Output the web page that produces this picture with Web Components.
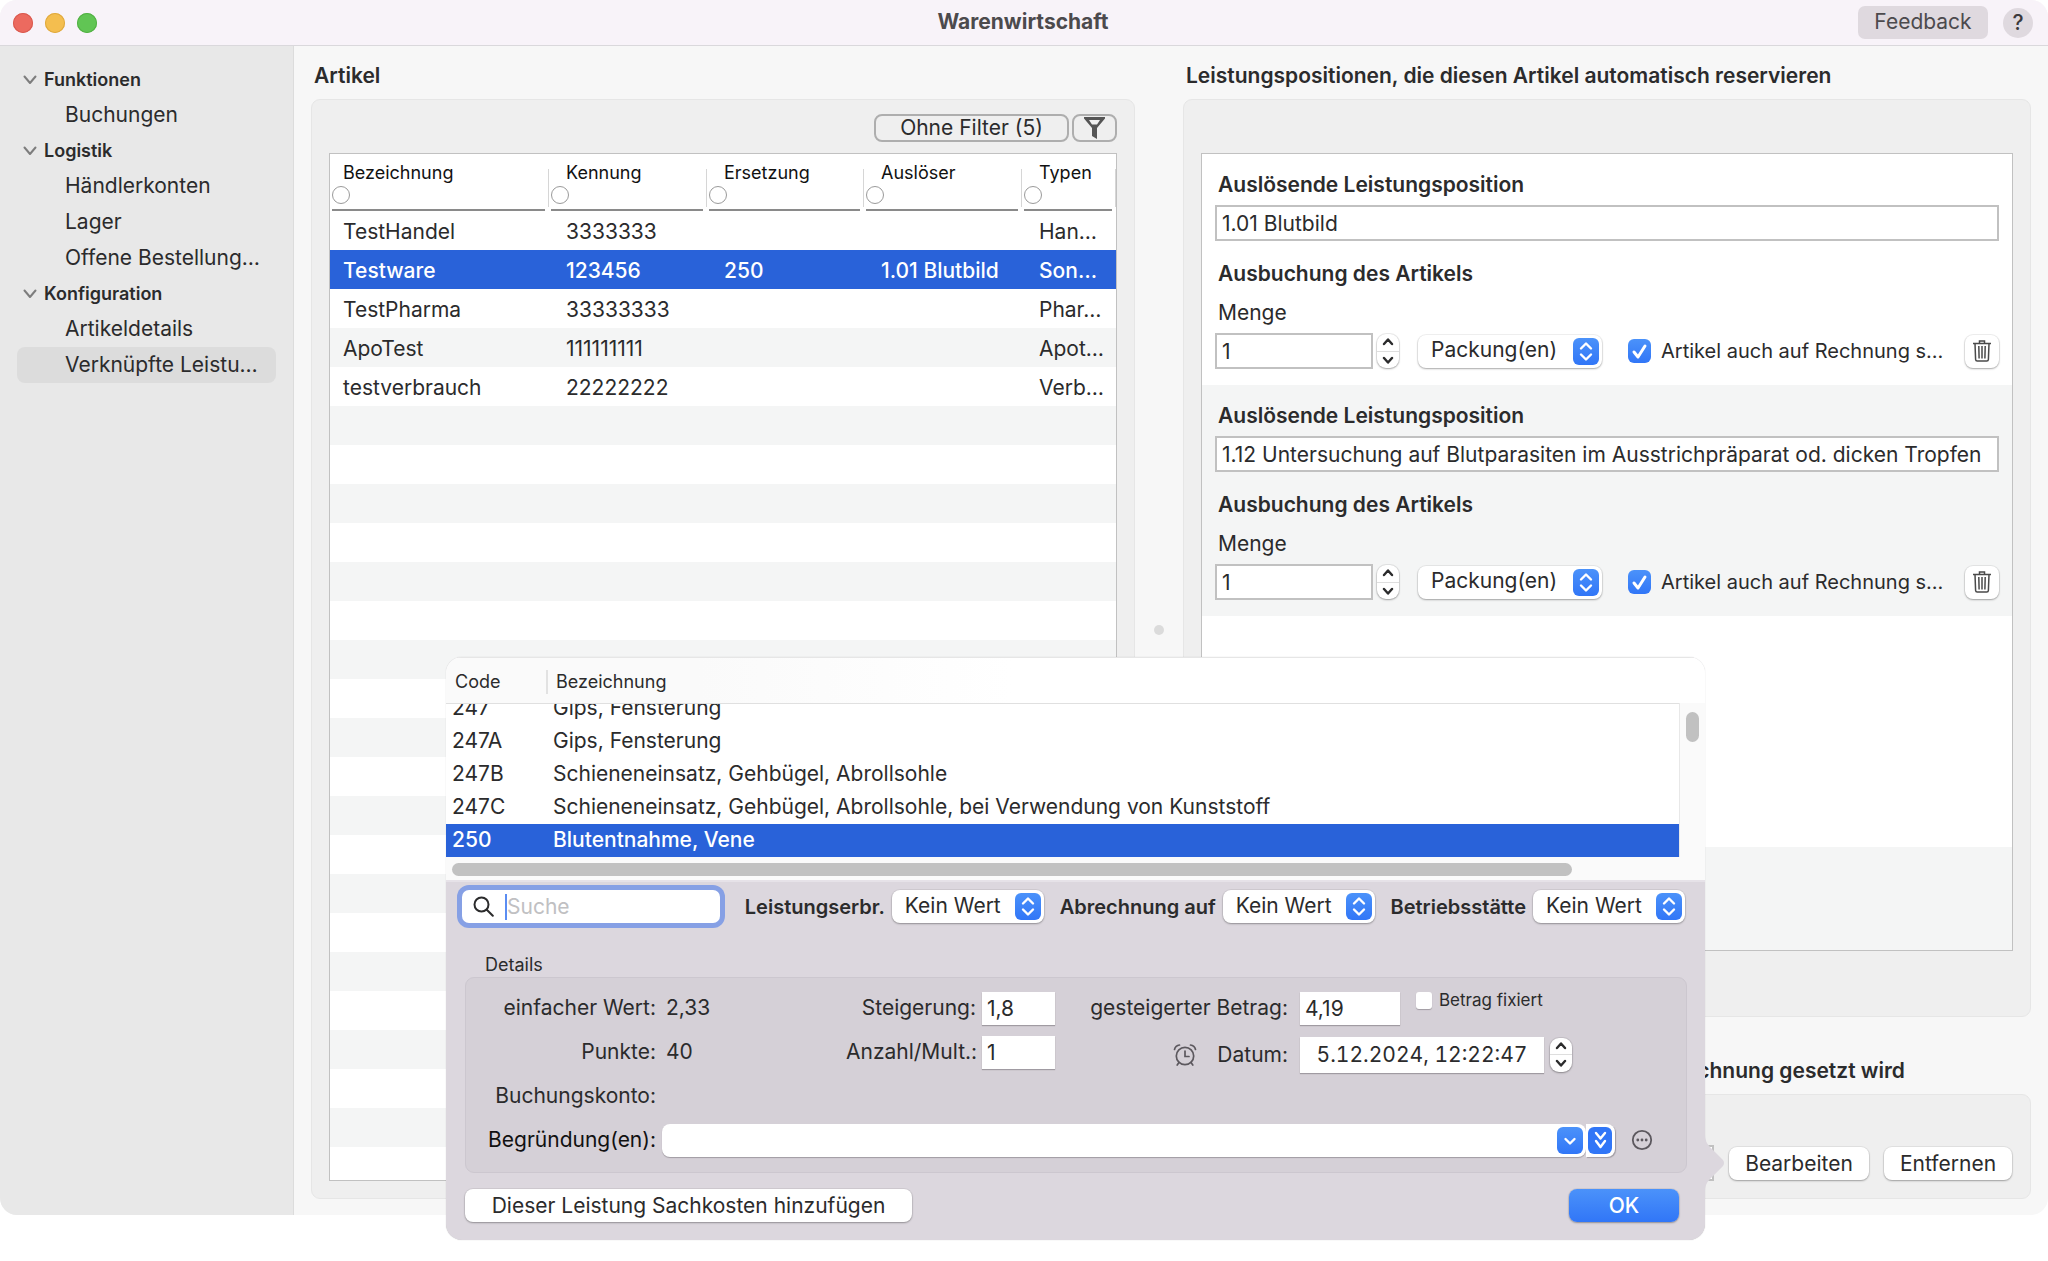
<!DOCTYPE html>
<html lang="de">
<head>
<meta charset="utf-8">
<title>Warenwirtschaft</title>
<style>
  html, body { margin: 0; height: 100%; background: #fff; }
  body {
    --ink: #2b2b2c; --accent: #2962d9; --stripe: #f4f5f5; --line: #c1c1c1;
    --panel: #efefef; --panel-line: #e6e6e6;
    --text: 21px; --medium: 20px; --small: 18px;
    font-family: Inter, "Liberation Sans", sans-serif; font-size: var(--text); line-height: 24px; color: var(--ink);
    box-sizing: border-box; padding-bottom: 46px; min-height: 1240px;
  }
</style>
</head>
<body>
<app-window>
  <title-bar slot="title" name="Warenwirtschaft"></title-bar>
  <side-nav slot="nav">
    <nav-group name="Funktionen">
      <nav-item>Buchungen</nav-item>
    </nav-group>
    <nav-group name="Logistik">
      <nav-item>Händlerkonten</nav-item>
      <nav-item>Lager</nav-item>
      <nav-item>Offene Bestellung…</nav-item>
    </nav-group>
    <nav-group name="Konfiguration">
      <nav-item>Artikeldetails</nav-item>
      <nav-item active>Verknüpfte Leistu…</nav-item>
    </nav-group>
  </side-nav>
  <group-panel slot="left" name="Artikel" fill>
    <article-browser></article-browser>
  </group-panel>
  <group-panel slot="right" name="Leistungspositionen, die diesen Artikel automatisch reservieren" fill>
    <position-list>
      <position-card code="1.01 Blutbild"></position-card>
      <position-card code="1.12 Untersuchung auf Blutparasiten im Ausstrichpräparat od. dicken Tropfen"></position-card>
    </position-list>
  </group-panel>
  <group-panel slot="right" name="Leistungsposition, die anstatt eines Artikels auf Rechnung gesetzt wird">
    <replacement-row></replacement-row>
  </group-panel>
  <service-popover slot="popover">
    <code-list slot="list"></code-list>
    <filter-bar slot="filter"></filter-bar>
    <service-details slot="details"></service-details>
  </service-popover>
</app-window>

<script>
const RESET = `
  :host, *, *::before, *::after { box-sizing: border-box; }
  button, input, select { font: inherit; color: inherit; margin: 0; padding: 0; border: 0; background: none; border-radius: 0; outline: none; }
  h1, h2, h3 { margin: 0; font-size: inherit; font-weight: 600; }
  a { color: inherit; text-decoration: none; }
  svg { display: block; flex: none; }
`;

function define(name, css, render) {
  customElements.define(name, class extends HTMLElement {
    connectedCallback() {
      if (this.shadowRoot) return;
      const root = this.attachShadow({ mode: 'open' });
      const tpl = document.createElement('template');
      tpl.innerHTML = `<style>${RESET}${css}</style>${render(this)}`;
      root.append(tpl.content.cloneNode(true));
    }
  });
}

define('app-window', `
  :host { display: grid; height: 100%; grid-template: 46px minmax(0, 1fr) / 294px minmax(0, 1fr); position: relative; background: #f7f7f7; border-radius: 17px; }
  .title { grid-column: 1 / -1; }
  .main { display: flex; padding: 14px 17px 16px; min-width: 0; }
  .left { flex: 824 1 0; min-width: 0; display: flex; flex-direction: column; }
  .right { flex: 848 1 0; min-width: 0; display: flex; flex-direction: column; gap: 38px; }
  .split { flex: 0 0 48px; display: flex; align-items: center; justify-content: center; }
  .split i { width: 10px; height: 10px; border-radius: 50%; background: #dbdbdb; }
`, () => `
  <div class="title"><slot name="title"></slot></div>
  <slot name="nav"></slot>
  <main class="main">
    <section class="left"><slot name="left"></slot></section>
    <div class="split"><i></i></div>
    <section class="right"><slot name="right"></slot></section>
  </main>
  <slot name="popover"></slot>
`);

define('title-bar', `
  :host { display: grid; grid-template-columns: 1fr auto 1fr; align-items: center; height: 46px; padding: 0 15px 0 13px; background: #f8f3f9; border-bottom: 1px solid #dad8dc; border-radius: 17px 17px 0 0; color: #4c4a4d; }
  h1 { font-weight: 700; line-height: 22px; padding-bottom: 2px; }
  .lights { display: flex; gap: 12px; }
  .lights button { width: 20px; height: 20px; border-radius: 50%; }
  .r { background: #ec6a5f; box-shadow: inset 0 0 0 1px #d95a50; }
  .y { background: #f4be4f; box-shadow: inset 0 0 0 1px #dfa93f; }
  .g { background: #61c554; box-shadow: inset 0 0 0 1px #53b045; }
  .tools { display: flex; gap: 15px; justify-content: flex-end; align-items: center; }
  .feedback { height: 33px; width: 130px; border-radius: 7px; background: #dfd9df; padding-bottom: 1px; }
  .help { width: 30px; height: 30px; border-radius: 50%; background: #dfd9df; font-weight: 500; color: #3b393c; }
`, el => `
  <div class="lights"><button class="r" aria-label="Schließen"></button><button class="y" aria-label="Minimieren"></button><button class="g" aria-label="Maximieren"></button></div>
  <h1>${el.getAttribute('name')}</h1>
  <div class="tools"><button class="feedback">Feedback</button><button class="help">?</button></div>
`);

define('side-nav', `
  :host { display: block; background: #e8e8e8; border-right: 1px solid #dcdcdc; border-radius: 0 0 0 17px; padding: 16px 17px; }
`, () => `<nav><slot></slot></nav>`);

define('nav-group', `
  :host { display: block; }
  h2 { display: flex; align-items: center; gap: 7px; height: 35px; padding-left: 6px; font-size: var(--small); }
`, el => `
  <h2><svg width="14" height="10" viewBox="0 0 14 10" fill="none" stroke="#7d7d7d" stroke-width="2" stroke-linecap="round" stroke-linejoin="round"><path d="M1.500 1.500 7 8l5.500-6.500"/></svg>${el.getAttribute('name')}</h2>
  <slot></slot>
`);

define('nav-item', `
  :host { display: block; border-radius: 8px; }
  :host([active]) { background: #dcdcdc; }
  a { display: flex; align-items: center; height: 36px; padding-left: 48px; white-space: nowrap; }
`, () => `<a href="#"><slot></slot></a>`);

define('group-panel', `
  :host { display: flex; flex-direction: column; min-height: 0; }
  :host([fill]) { flex: 1; }
  h2 { padding-left: 3px; height: 39px; line-height: 32px; white-space: nowrap; }
  .box { flex: 1; min-height: 0; display: flex; flex-direction: column; background: var(--panel); border: 1px solid var(--panel-line); border-radius: 9px; }
`, el => `<h2>${el.getAttribute('name')}</h2><div class="box"><slot></slot></div>`);

define('push-button', `
  :host { display: block; }
  button { width: 100%; height: 33px; padding: 0; border-radius: 8px; background: #fff; box-shadow: 0 0 0 1px rgba(0,0,0,.05), 0 1px 2px rgba(0,0,0,.3); white-space: nowrap; line-height: 31px; }
  :host([primary]) button { background: linear-gradient(#4b92fa, #3176f7); color: #fff; font-weight: 500; }
`, () => `<button><slot></slot></button>`);

define('value-stepper', `
  :host { display: flex; flex-direction: column; flex: none; width: 22px; height: 34px; border-radius: 9px; background: #fff; box-shadow: 0 0 0 1px rgba(0,0,0,.07), 0 1px 2px rgba(0,0,0,.3); }
  button { flex: 1; display: flex; align-items: center; justify-content: center; }
  button + button { border-top: 1px solid #dedede; }
`, () => `
  <button aria-label="Mehr"><svg width="12" height="8" viewBox="0 0 12 8" fill="none" stroke="#2b2b2c" stroke-width="2.400" stroke-linecap="round" stroke-linejoin="round"><path d="m2 6 4-4.500L10 6"/></svg></button>
  <button aria-label="Weniger"><svg width="12" height="8" viewBox="0 0 12 8" fill="none" stroke="#2b2b2c" stroke-width="2.400" stroke-linecap="round" stroke-linejoin="round"><path d="m2 2 4 4.500L10 2"/></svg></button>
`);

define('popup-select', `
  :host { display: flex; align-items: center; flex: none; }
  label { font-weight: 600; font-size: var(--medium); white-space: nowrap; padding-right: 7px; }
  .box { display: grid; flex: 1; align-items: center; border-radius: 8px; background: #fff; box-shadow: 0 0 0 1px rgba(0,0,0,.05), 0 1px 2px rgba(0,0,0,.3); }
  select { grid-area: 1 / 1; appearance: none; width: var(--select-width, 152px); height: 33px; padding: 0 0 2px 13px; }
  svg { grid-area: 1 / 1; justify-self: end; margin-right: 3px; pointer-events: none; }
`, el => `
  ${el.hasAttribute('label') ? `<label for="s">${el.getAttribute('label')}</label>` : ''}
  <div class="box">
    <select id="s" ${el.hasAttribute('label') ? '' : 'aria-label="Einheit"'}><option>${el.getAttribute('value')}</option></select>
    <svg width="26" height="27" viewBox="0 0 26 27"><defs><linearGradient id="g" x2="0" y2="1"><stop stop-color="#4b92fa"/><stop offset="1" stop-color="#3176f7"/></linearGradient></defs><rect width="26" height="27" rx="6" fill="url(#g)"/><path d="m8 10.500 5-5 5 5M8 16.500l5 5 5-5" fill="none" stroke="#fff" stroke-width="2.400" stroke-linecap="round" stroke-linejoin="round"/></svg>
  </div>
`);

const ARTICLES = [
  ['TestHandel', '3333333', '', '', 'Han…'],
  ['Testware', '123456', '250', '1.01 Blutbild', 'Son…'],
  ['TestPharma', '33333333', '', '', 'Phar…'],
  ['ApoTest', '111111111', '', '', 'Apot…'],
  ['testverbrauch', '22222222', '', '', 'Verb…'],
];

define('article-browser', `
  :host { display: flex; flex-direction: column; flex: 1; padding: 14px 17px 17px; min-height: 0; }
  .tools { display: flex; justify-content: flex-end; gap: 3px; margin-bottom: 11px; }
  .tools button { height: 28px; border: 2px solid #aeaeae; border-radius: 8px; line-height: 22px; }
  .filter { width: 195px; }
  .funnel { width: 45px; display: flex; align-items: center; justify-content: center; }
  .frame { flex: 1; border: 1px solid var(--line); overflow: hidden; background: repeating-linear-gradient(#fff 0 39px, var(--stripe) 39px 78px) 0 57px; }
  table { width: 100%; border-collapse: collapse; table-layout: fixed; }
  th { height: 57px; padding: 0; background: #fff; text-align: left; font-weight: 400; font-size: var(--small); color: #111; vertical-align: top; }
  th div { height: 57px; display: grid; grid-template: 32px 25px / 1fr 1px; }
  th span { line-height: 37px; padding-left: 17px; }
  th:first-child span, td:first-child { padding-left: 13px; }
  th .pick { display: block; appearance: none; width: 18px; height: 18px; border: 1px solid #9a9a9a; border-radius: 50%; background: #fff; }
  th label { grid-area: 2 / 1; border-bottom: 2px solid #8a8a8a; margin: 0 3px 0 2px; }
  th i { grid-area: 1 / 2 / 3 / 3; width: 1px; margin: 15px 0 4px; background: #d6d6d6; }
  td { height: 39px; padding: 2px 0 0 17px; white-space: nowrap; }
  tr.on td { background: var(--accent); color: #fff; font-weight: 500; }
`, () => `
  <div class="tools">
    <button class="filter">Ohne Filter (5)</button>
    <button class="funnel" aria-label="Filter"><svg width="21" height="22" viewBox="0 0 21 22"><path fill="#555" fill-rule="evenodd" d="M0 0h21v1.500L13 11v11l-5-3v-8L0 1.500zM5 3l3 4.500h5L16 3z"/></svg></button>
  </div>
  <div class="frame">
    <table>
      <colgroup><col style="width:219px"><col style="width:158px"><col style="width:157px"><col style="width:158px"><col></colgroup>
      <thead><tr>${['Bezeichnung', 'Kennung', 'Ersetzung', 'Auslöser', 'Typen'].map(h => `<th><div><span>${h}</span><i></i><label><input type="radio" class="pick" aria-label="${h}"></label></div></th>`).join('')}</tr></thead>
      <tbody>${ARTICLES.map((r, i) => `<tr class="${i === 1 ? 'on' : ''}">${r.map(c => `<td>${c}</td>`).join('')}</tr>`).join('')}</tbody>
    </table>
  </div>
`);

define('position-list', `
  :host { display: flex; flex-direction: column; flex: 1; padding: 53px 17px 65px; min-height: 0; }
  .frame { flex: 1; border: 1px solid var(--line); overflow: hidden; background: repeating-linear-gradient(#fff 0 231px, var(--stripe) 231px 462px); }
`, () => `<div class="frame"><slot></slot></div>`);

define('position-card', `
  :host { display: block; height: 231px; padding: 15px 13px 0 13px; }
  h3, label.name { display: block; line-height: 32px; padding-left: 3px; }
  label.name { font-weight: 600; }
  input[type=text] { border: 2px solid var(--line); background: #fff; height: 36px; padding: 0 5px; width: 100%; display: block; }
  label.name + input { margin: 4px 0 17px; }
  label.qty { display: block; line-height: 24px; padding: 11px 0 8px 3px; }
  .row { display: flex; align-items: center; }
  .row input.num { width: 158px; margin-right: 4px; flex: none; }
  popup-select { --select-width: 184px; margin: 0 26px 0 19px; }
  .tick { display: flex; align-items: center; gap: 10px; flex: 1; min-width: 0; white-space: nowrap; font-size: var(--medium); }
  .tick span { display: grid; flex: none; }
  .tick input { appearance: none; grid-area: 1 / 1; width: 23px; height: 24px; border-radius: 6px; background: linear-gradient(#4b92fa, #3176f7); }
  .tick svg { grid-area: 1 / 1; pointer-events: none; }
  .trash { width: 34px; height: 33px; border-radius: 8px; background: #fff; box-shadow: 0 0 0 1px rgba(0,0,0,.06), 0 1px 2px rgba(0,0,0,.3); display: flex; align-items: center; justify-content: center; }
`, el => `
  <label class="name" for="p">Auslösende Leistungsposition</label>
  <input id="p" type="text" value="${el.getAttribute('code')}">
  <h3>Ausbuchung des Artikels</h3>
  <label class="qty" for="q">Menge</label>
  <div class="row">
    <input id="q" class="num" type="text" value="1">
    <value-stepper></value-stepper>
    <popup-select value="Packung(en)"></popup-select>
    <label class="tick"><span><input type="checkbox" checked><svg width="23" height="24" viewBox="0 0 23 24" fill="none" stroke="#fff" stroke-width="3" stroke-linecap="round" stroke-linejoin="round"><path d="m6 13 4 5L17 7"/></svg></span>Artikel auch auf Rechnung s…</label>
    <button class="trash" aria-label="Löschen"><svg width="18" height="22" viewBox="0 0 18 22" fill="none" stroke="#4a4a4a" stroke-width="1.500"><path d="M0 3.500h18M6.500 3.500V1h5v2.500M2 3.500l.6 16Q2.700 21 4.200 21h9.600q1.500 0 1.600-1.500l.6-16M5.800 6l.3 12.500M9 6v12.500M12.200 6l-.3 12.500"/></svg></button>
  </div>
`);

define('replacement-row', `
  :host { display: flex; align-items: center; gap: 15px; padding: 50px 18px 17px 17px; }
  input { flex: 1; min-width: 0; height: 36px; border: 2px solid var(--line); background: #fff; padding: 0 5px; }
  push-button:nth-of-type(1) { width: 140px; }
  push-button:nth-of-type(2) { width: 128px; }
`, () => `<input type="text" aria-label="Ersetzende Leistungsposition"><push-button>Bearbeiten</push-button><push-button>Entfernen</push-button>`);

define('service-popover', `
  :host { position: absolute; left: 446px; top: 657px; width: 1259px; z-index: 2; display: flex; flex-direction: column; background: #dcd7de; border-radius: 16px; box-shadow: 0 0 1px rgba(0,0,0,.25); }
  .arrow { position: absolute; left: 100%; top: 478px; }
  .foot { display: flex; justify-content: space-between; padding: 16px 26px 18px 19px; }
  .foot push-button:first-child { width: 447px; }
  .foot push-button:last-child { width: 110px; }
`, () => `
  <slot name="list"></slot>
  <slot name="filter"></slot>
  <slot name="details"></slot>
  <div class="foot"><push-button>Dieser Leistung Sachkosten hinzufügen</push-button><push-button primary>OK</push-button></div>
  <svg class="arrow" width="20" height="56" viewBox="0 0 20 56"><path fill="#dcd7de" d="M0 0q0 7 5 12l13 13q2 3 0 6L5 44q-5 5-5 12z"/></svg>
`);

const CODES = [
  ['247', 'Gips, Fensterung'],
  ['247A', 'Gips, Fensterung'],
  ['247B', 'Schieneneinsatz, Gehbügel, Abrollsohle'],
  ['247C', 'Schieneneinsatz, Gehbügel, Abrollsohle, bei Verwendung von Kunststoff'],
  ['250', 'Blutentnahme, Vene'],
];

define('code-list', `
  :host { display: grid; grid-template: 46px 154px 23px / minmax(0, 1fr) 26px; background: #fafafa; border-radius: 16px 16px 0 0; border-bottom: 2px solid #e6e2e8; overflow: hidden; }
  .head { grid-column: 1 / -1; background: linear-gradient(90deg, #fafafa, #fafafa 20%, #fff 45%); font-size: var(--small); display: flex; align-items: center; padding-top: 2px; border-top: 1px solid #e6e6e6; }
  .head span:first-child { width: 100px; padding-left: 9px; }
  .head span + span { border-left: 2px solid #e2e2e2; padding-left: 8px; }
  .view { border-top: 1px solid #e0e0e0; background: #fff; overflow: hidden; display: flex; flex-direction: column; justify-content: flex-end; }
  table { border-collapse: collapse; width: 100%; table-layout: fixed; flex: none; }
  td { height: 33px; padding: 0 0 1px 6px; white-space: nowrap; line-height: 24px; }
  tr:last-child td { background: var(--accent); color: #fff; font-weight: 500; }
  .v { border-left: 1px solid #e8e8e8; padding: 9px 6px; }
  .v i, .h i { display: block; background: #c1c1c1; border-radius: 7px; }
  .v i { height: 30px; width: 13px; }
  .h { padding: 6px; grid-column: 1 / -1; }
  .h i { height: 13px; width: 1120px; }
`, () => `
  <div class="head"><span>Code</span><span>Bezeichnung</span></div>
  <div class="view"><table><colgroup><col style="width:101px"><col></colgroup>${CODES.map(r => `<tr><td>${r[0]}</td><td>${r[1]}</td></tr>`).join('')}</table></div>
  <div class="v"><i></i></div>
  <div class="h"><i></i></div>
`);

define('filter-bar', `
  :host { display: flex; align-items: center; justify-content: space-between; padding: 8px 20px 0 16px; }
  .search { display: flex; align-items: center; width: 258px; height: 33px; border-radius: 7px; background: #fff; box-shadow: 0 0 0 5px #86a0e5; padding-left: 11px; margin-right: 9px; }
  .search i { width: 2px; height: 26px; background: #5b8df2; margin-left: 11px; }
  input { flex: 1; min-width: 0; height: 33px; }
  input::placeholder { color: #c0c0c2; opacity: 1; }
`, () => `
  <label class="search"><svg width="21" height="21" viewBox="0 0 21 21" fill="none" stroke="#2b2b2c" stroke-width="2" stroke-linecap="round"><circle cx="8.500" cy="8.500" r="7"/><path d="m13.800 13.800 6 6"/></svg><i></i><input type="search" placeholder="Suche" aria-label="Suche"></label>
  <popup-select label="Leistungserbr." value="Kein Wert"></popup-select>
  <popup-select label="Abrechnung auf" value="Kein Wert"></popup-select>
  <popup-select label="Betriebsstätte" value="Kein Wert"></popup-select>
`);

define('service-details', `
  :host { display: block; padding: 30px 18px 0 19px; }
  h3 { font-size: var(--small); font-weight: 400; padding-left: 20px; }
  .box { display: grid; grid-template: repeat(4, 44px) / 190px minmax(0, 1fr) 130px 73px 233px 386px; column-gap: 6px; align-items: center; padding: 8px 0 10px; background: #d5d0d7; border: 1px solid #ccc7cf; border-radius: 9px; }
  .l { text-align: right; white-space: nowrap; }
  .l.pad { padding-right: 6px; }
  output { padding-left: 4px; }
  input { background: #fff; box-shadow: 0 1px 1px #a09ba2; height: 33px; padding: 0 5px; width: 100%; }
  .amount { display: flex; align-items: flex-start; }
  .amount input[type=text] { width: 100px; }
  .amount label { display: flex; align-items: center; gap: 7px; font-size: 17px; line-height: 17px; margin-left: 16px; }
  .amount input[type=checkbox] { appearance: none; width: 16px; height: 17px; border-radius: 3px; padding: 0; }
  .when, .date { padding-top: 5px; }
  .when { display: flex; align-items: center; justify-content: flex-end; gap: 20px; }
  .date { display: flex; align-items: center; gap: 6px; }
  .date input { width: 244px; height: 36px; text-align: center; font-variant-numeric: tabular-nums; }
  .reason { grid-column: 2 / -1; display: flex; align-items: center; }
  .combo { flex: 0 0 924px; display: flex; align-items: center; height: 33px; background: #fff; border-radius: 8px; box-shadow: 0 1px 1px #a09ba2; padding-right: 3px; }
  .combo input { flex: 1; background: none; box-shadow: none; min-width: 0; }
  .more { height: 33px; padding: 0 3px 0 2px; background: #fff; border-radius: 0 8px 8px 0; box-shadow: 1px 1px 1px #a09ba2; margin-right: 16px; display: flex; align-items: center; }
  .black { color: #111; }
`, () => `
  <h3>Details</h3>
  <div class="box">
    <span class="l">einfacher Wert:</span><output>2,33</output>
    <label class="l" for="st">Steigerung:</label><input id="st" type="text" value="1,8">
    <label class="l pad" for="be">gesteigerter Betrag:</label>
    <div class="amount"><input id="be" type="text" value="4,19"><label><input type="checkbox">Betrag fixiert</label></div>

    <span class="l">Punkte:</span><output>40</output>
    <label class="l" for="an">Anzahl/Mult.:</label><input id="an" type="text" value="1">
    <div class="when l pad">
      <svg width="24" height="24" viewBox="0 0 24 24" fill="none" stroke="#5c585e" stroke-width="1.700" stroke-linecap="round"><circle cx="12" cy="13" r="8.700"/><path d="M12 8v5.500h4M1.500 6.500q1-4 5-4.500M22.500 6.500q-1-4-5-4.500M6 19.500l-1.800 2.500M18 19.500l1.800 2.500"/></svg>
      <label for="da">Datum:</label>
    </div>
    <div class="date"><input id="da" type="text" value="5.12.2024, 12:22:47"><value-stepper></value-stepper></div>

    <span class="l">Buchungskonto:</span><output></output><span></span><span></span><span></span><span></span>

    <label class="l black" for="gr">Begründung(en):</label>
    <div class="reason">
      <div class="combo"><input id="gr" type="text"><button aria-label="Liste öffnen"><svg width="26" height="27" viewBox="0 0 26 27"><defs><linearGradient id="c" x2="0" y2="1"><stop stop-color="#4b92fa"/><stop offset="1" stop-color="#3176f7"/></linearGradient></defs><rect width="26" height="27" rx="6" fill="url(#c)"/><path d="m8.500 12 4.500 4.500 4.500-4.500" fill="none" stroke="#fff" stroke-width="2.400" stroke-linecap="round" stroke-linejoin="round"/></svg></button></div>
      <button class="more" aria-label="Alle Begründungen"><svg width="24" height="27" viewBox="0 0 24 27"><rect width="24" height="27" rx="6" fill="#3176f7"/><path d="m8 6 4.500 5.500L17 6M8 14l4.500 6 4.500-6" fill="none" stroke="#fff" stroke-width="2.400" stroke-linecap="round" stroke-linejoin="round"/></svg></button>
      <button aria-label="Weitere Optionen"><svg width="22" height="22" viewBox="0 0 22 22"><circle cx="11" cy="11" r="9.200" fill="none" stroke="#5c585e" stroke-width="1.800"/><g fill="#5c585e"><circle cx="6.800" cy="11" r="1.400"/><circle cx="11" cy="11" r="1.400"/><circle cx="15.200" cy="11" r="1.400"/></g></svg></button>
    </div>
  </div>
`);
</script>
</body>
</html>
